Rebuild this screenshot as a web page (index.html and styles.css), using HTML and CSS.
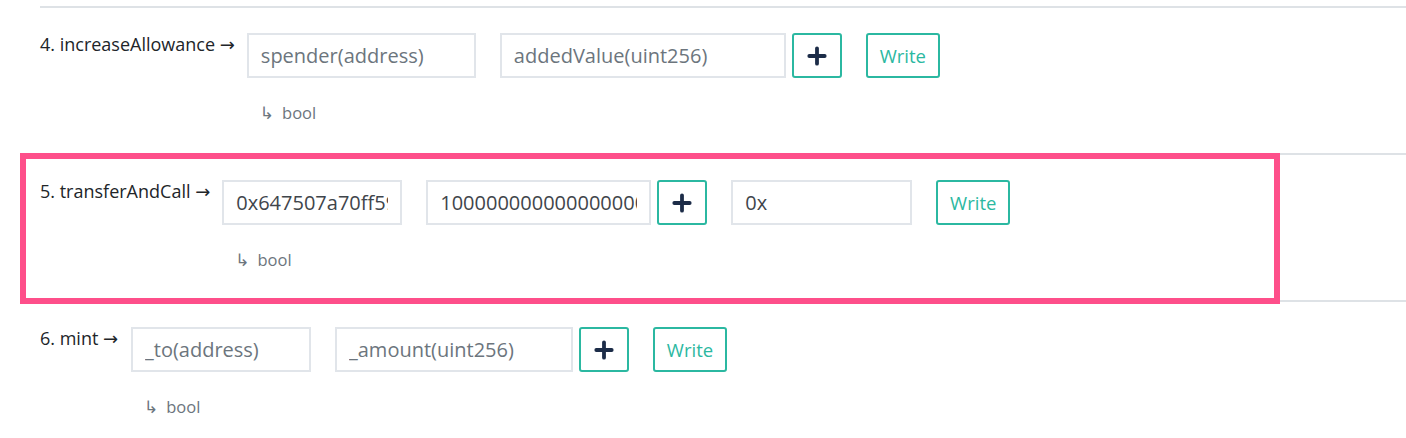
FILE: index.html
```html
<!DOCTYPE html>
<html lang="en">
<head>
<meta charset="utf-8">
<title>Write Contract</title>
<link rel="stylesheet" href="styles.css">
</head>
<body>
<div class="fn-list">
  <div class="fn">
    <div class="fn-name">4. increaseAllowance <span class="name-arrow">→</span></div>
    <div class="fn-body">
      <div class="fn-inputs">
        <input class="field w-228" type="text" placeholder="spender(address)">
        <input class="field w-285 gap-left" type="text" placeholder="addedValue(uint256)">
        <button class="btn-plus" type="button" aria-label="add">
          <svg viewBox="0 0 20 20" width="20" height="20"><path d="M10 2.3v15.4M2.3 10h15.4" stroke="#1c2c48" stroke-width="3.8" stroke-linecap="round" fill="none"/></svg>
        </button>
        <button class="btn-write gap-left" type="button">Write</button>
      </div>
      <div class="fn-returns"><span class="ret-arrow">↳</span>bool</div>
    </div>
  </div>

  <div class="fn fn-highlight">
    <div class="fn-name">5. transferAndCall <span class="name-arrow">→</span></div>
    <div class="fn-body">
      <div class="fn-inputs">
        <input class="field w-180 filled" type="text" value="0x647507a70ff598f386cb96ae5046486389368c66">
        <input class="field w-225 filled gap-left" type="text" value="1000000000000000000000">
        <button class="btn-plus" type="button" aria-label="add">
          <svg viewBox="0 0 20 20" width="20" height="20"><path d="M10 2.3v15.4M2.3 10h15.4" stroke="#1c2c48" stroke-width="3.8" stroke-linecap="round" fill="none"/></svg>
        </button>
        <input class="field w-181 filled gap-left" type="text" value="0x">
        <button class="btn-write gap-left" type="button">Write</button>
      </div>
      <div class="fn-returns"><span class="ret-arrow">↳</span>bool</div>
    </div>
  </div>

  <div class="fn">
    <div class="fn-name">6. mint <span class="name-arrow">→</span></div>
    <div class="fn-body">
      <div class="fn-inputs">
        <input class="field w-180" type="text" placeholder="_to(address)">
        <input class="field w-238 gap-left" type="text" placeholder="_amount(uint256)">
        <button class="btn-plus" type="button" aria-label="add">
          <svg viewBox="0 0 20 20" width="20" height="20"><path d="M10 2.3v15.4M2.3 10h15.4" stroke="#1c2c48" stroke-width="3.8" stroke-linecap="round" fill="none"/></svg>
        </button>
        <button class="btn-write gap-left" type="button">Write</button>
      </div>
      <div class="fn-returns"><span class="ret-arrow">↳</span>bool</div>
    </div>
  </div>
</div>
</body>
</html>
```

FILE: styles.css
```css
html, body {
  margin: 0;
  padding: 0;
  background: #ffffff;
}

body {
  font-family: "Open Sans", "Noto Sans", "Liberation Sans", sans-serif;
  color: #212529;
}

.fn-list {
  padding: 6px 0 0 40px;
}

.fn {
  display: flex;
  align-items: flex-start;
  gap: 12px;
  border-top: 2px solid #dee2e6;
  padding: 25px 0 29px 0;
}

.fn-highlight {
  position: relative;
}

.fn-highlight::after {
  content: "";
  position: absolute;
  left: -20px;
  top: -2px;
  right: 126px;
  bottom: -4px;
  border: 6px solid #fe4f8a;
  pointer-events: none;
}

.fn-name {
  min-width: 79px;
  font-size: 18px;
  line-height: 22px;
  color: #212529;
  white-space: nowrap;
}

.name-arrow {
  font-family: "DejaVu Sans", sans-serif;
  font-size: 18px;
  line-height: 22px;
}

.fn-body {
  display: flex;
  flex-direction: column;
}

.fn-inputs {
  display: flex;
  align-items: center;
  gap: 6px;
}

.gap-left {
  margin-left: 18px;
}

.field {
  box-sizing: border-box;
  height: 45px;
  border: 2px solid #e1e5ea;
  border-radius: 0;
  padding: 0 12px;
  font-family: inherit;
  font-size: 20px;
  color: #3f454b;
  background: #ffffff;
  outline: none;
}

.field::placeholder {
  color: #6c757d;
  opacity: 1;
}

.w-180 { width: 180px; }
.w-181 { width: 181px; }
.w-225 { width: 225px; }
.w-228 { width: 229px; }
.w-238 { width: 238px; }
.w-285 { width: 286px; }

.btn-plus {
  box-sizing: border-box;
  width: 50px;
  height: 45px;
  border: 2px solid #2bb8a1;
  border-radius: 3px;
  background: #ffffff;
  display: flex;
  align-items: center;
  justify-content: center;
  padding: 0;
}

.btn-plus svg {
  display: block;
}

.btn-write {
  box-sizing: border-box;
  width: 74px;
  height: 45px;
  border: 2px solid #2bb8a1;
  border-radius: 3px;
  background: #ffffff;
  color: #2bb8a1;
  font-family: inherit;
  font-size: 18.5px;
  padding: 0;
}

.fn-returns {
  margin-top: 24px;
  padding-left: 13px;
  font-size: 16.5px;
  line-height: 22px;
  color: #6c757d;
}

.ret-arrow {
  font-family: "DejaVu Sans", sans-serif;
  font-size: 17px;
  line-height: 22px;
  margin-right: 8px;
}
```
